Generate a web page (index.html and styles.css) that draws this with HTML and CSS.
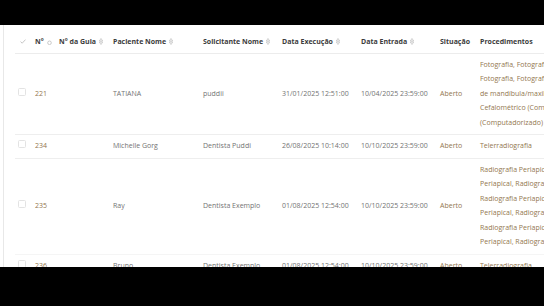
FILE: index.html
```html
<!DOCTYPE html>
<html lang="pt-BR">
<head>
<meta charset="utf-8">
<title>Guias</title>
<link rel="stylesheet" href="styles.css">
</head>
<body>
<div class="viewport">
  <div class="panel">
    <table class="grid">
      <colgroup>
        <col class="c-check"><col class="c-num"><col class="c-guia"><col class="c-pac"><col class="c-sol"><col class="c-exec"><col class="c-ent"><col class="c-sit"><col class="c-proc">
      </colgroup>
      <thead>
        <tr>
          <th class="chk-h"><svg width="6" height="5" viewBox="0 0 6 5"><path d="M0.5 2.6 L2.2 4.2 L5.5 0.6" fill="none" stroke="#b8b8b8" stroke-width="0.8"/></svg></th>
          <th>N° <svg class="sort" width="5" height="5" viewBox="0 0 5 5"><circle cx="2.5" cy="2.8" r="1.8" fill="none" stroke="#b4b4b4" stroke-width="0.7"/></svg></th>
          <th>N° da Guia <svg class="sort" width="4" height="7" viewBox="0 0 4 7"><path d="M2 0.5 L3.7 3 L0.3 3 Z M0.3 4 L3.7 4 L2 6.5 Z" fill="none" stroke="#b4b4b4" stroke-width="0.6"/></svg></th>
          <th>Paciente Nome <svg class="sort" width="4" height="7" viewBox="0 0 4 7"><path d="M2 0.5 L3.7 3 L0.3 3 Z M0.3 4 L3.7 4 L2 6.5 Z" fill="none" stroke="#b4b4b4" stroke-width="0.6"/></svg></th>
          <th>Solicitante Nome <svg class="sort" width="4" height="7" viewBox="0 0 4 7"><path d="M2 0.5 L3.7 3 L0.3 3 Z M0.3 4 L3.7 4 L2 6.5 Z" fill="none" stroke="#b4b4b4" stroke-width="0.6"/></svg></th>
          <th>Data Execução <svg class="sort" width="4" height="7" viewBox="0 0 4 7"><path d="M2 0.5 L3.7 3 L0.3 3 Z M0.3 4 L3.7 4 L2 6.5 Z" fill="none" stroke="#b4b4b4" stroke-width="0.6"/></svg></th>
          <th>Data Entrada <svg class="sort" width="4" height="7" viewBox="0 0 4 7"><path d="M2 0.5 L3.7 3 L0.3 3 Z M0.3 4 L3.7 4 L2 6.5 Z" fill="none" stroke="#b4b4b4" stroke-width="0.6"/></svg></th>
          <th>Situação</th>
          <th>Procedimentos</th>
        </tr>
      </thead>
      <tbody>
        <tr>
          <td class="chk"><span class="box"></span></td>
          <td class="accent">221</td>
          <td></td>
          <td>TATIANA</td>
          <td>puddii</td>
          <td>31/01/2025 12:51:00</td>
          <td>10/04/2025 23:59:00</td>
          <td class="accent">Aberto</td>
          <td class="accent proc">Fotografia, Fotografia, Fotografia,<br>Fotografia, Fotografia, Radiografia Panorâmica<br>de mandíbula/maxila, Telerradiografia<br>Cefalométrico (Computadorizado), Traçado<br>(Computadorizado)</td>
        </tr>
        <tr>
          <td class="chk"><span class="box"></span></td>
          <td class="accent">234</td>
          <td></td>
          <td>Michelle Gorg</td>
          <td>Dentista Puddi</td>
          <td>26/08/2025 10:14:00</td>
          <td>10/10/2025 23:59:00</td>
          <td class="accent">Aberto</td>
          <td class="accent proc">Telerradiografia</td>
        </tr>
        <tr class="soft">
          <td class="chk"><span class="box"></span></td>
          <td class="accent">235</td>
          <td></td>
          <td>Ray</td>
          <td>Dentista Exemplo</td>
          <td>01/08/2025 12:54:00</td>
          <td>10/10/2025 23:59:00</td>
          <td class="accent">Aberto</td>
          <td class="accent proc">Radiografia Periapical, Radiografia<br>Periapical, Radiografia Periapical,<br>Radiografia Periapical, Radiografia<br>Periapical, Radiografia Periapical,<br>Radiografia Periapical, Radiografia<br>Periapical, Radiografia Periapical</td>
        </tr>
        <tr>
          <td class="chk"><span class="box"></span></td>
          <td class="accent">236</td>
          <td></td>
          <td>Bruno</td>
          <td>Dentista Exemplo</td>
          <td>01/08/2025 12:54:00</td>
          <td>10/10/2025 23:59:00</td>
          <td class="accent">Aberto</td>
          <td class="accent proc">Telerradiografia</td>
        </tr>
      </tbody>
    </table>
  </div>
</div>
</body>
</html>
```

FILE: styles.css
```css
html, body {
  margin: 0;
  padding: 0;
  background: #000;
}

.viewport {
  margin-top: 25px;
  height: 242px;
  background: #fff;
  overflow: hidden;
  padding-left: 3px;
}

.panel {
  height: 100%;
  border-left: 1px solid #e8e8e8;
  padding-left: 11px;
}

.grid {
  border-collapse: collapse;
  table-layout: fixed;
  width: 676px;
  font-family: "Open Sans", "DejaVu Sans", sans-serif;
  font-size: 7px;
  line-height: 14.5px;
  color: #737373;
}

.c-check { width: 16px; }
.c-num { width: 24px; }
.c-guia { width: 54px; }
.c-pac { width: 90px; }
.c-sol { width: 79px; }
.c-exec { width: 79px; }
.c-ent { width: 79px; }
.c-sit { width: 40px; }
.c-proc { width: 235px; }

.grid th {
  text-align: left;
  font-weight: 700;
  color: #3c3c3c;
  padding: 10px 0 3px 4px;
  border-bottom: 1px solid #ececec;
  white-space: nowrap;
}

.grid th.chk-h {
  padding-left: 5px;
}

.sort {
  vertical-align: -1px;
  margin-left: 1px;
}

.grid td {
  padding: 4px 0 4px 4px;
  border-bottom: 1px solid #eeeeee;
  vertical-align: middle;
  white-space: nowrap;
}

.grid tr.soft td {
  border-bottom-color: #f5f5f5;
}

.grid td.chk {
  padding-left: 3px;
}

.box {
  display: block;
  width: 6px;
  height: 6px;
  border: 1px solid #e3e3e3;
  border-radius: 1.5px;
  margin-top: -4px;
}

.accent {
  color: #93774f;
}

.proc {
  overflow: hidden;
}
```
